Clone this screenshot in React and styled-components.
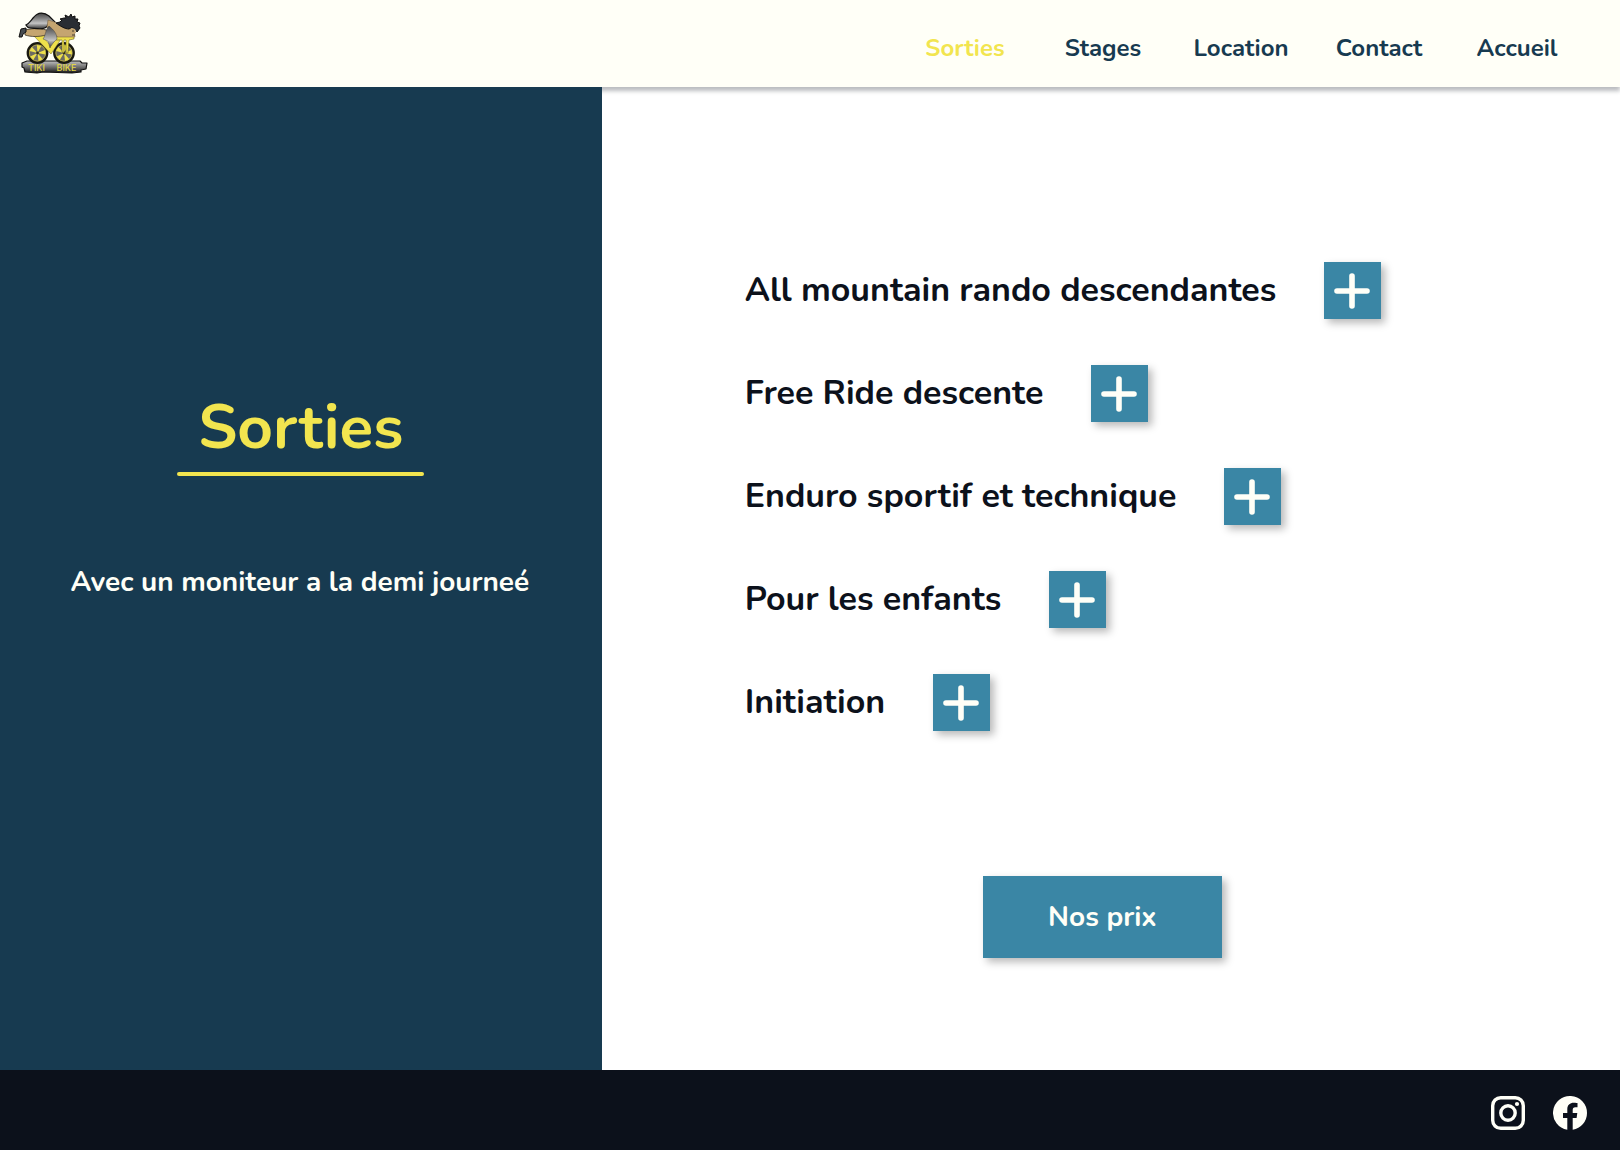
import React from "react";
import styled, { createGlobalStyle } from "styled-components";

const Global = createGlobalStyle`
  * { box-sizing: border-box; }
  html, body, #root { height: 100%; }
  body {
    margin: 0;
    background: #fff;
    color: #0c111b;
    font-family: Nunito, Lato, sans-serif;
    font-weight: 700;
  }
  h1, p, ul { margin: 0; padding: 0; }
`;

const Page = styled.div`
  min-height: 100%;
  display: flex;
  flex-direction: column;
`;

const Header = styled.header`
  position: relative;
  z-index: 1;
  height: 87px;
  flex: none;
  display: flex;
  align-items: center;
  justify-content: space-between;
  padding: 0 34px 0 16px;
  background: #fffff7;
  box-shadow: 0 4px 4px rgba(12, 17, 27, 0.28);
`;

const LogoLink = styled.a`
  display: block;
  height: 68px;
`;

const Nav = styled.nav`
  width: 690px;
  display: grid;
  grid-template-columns: repeat(5, 1fr);
`;

const NavLink = styled.a`
  color: ${(p) => (p.$active ? "#f2e54f" : "#173a50")};
  font-size: 24px;
  line-height: 34px;
  padding-top: 8px;
  text-align: center;
  text-decoration: none;
`;

const Main = styled.main`
  flex: 1;
  display: grid;
  grid-template-columns: 13fr 22fr;
`;

const Intro = styled.section`
  position: relative;
  z-index: 2;
  background: #173a50;
  padding-top: 300px;
  display: flex;
  flex-direction: column;
  align-items: center;
`;

const Title = styled.h1`
  min-width: 247px;
  color: #f2e54f;
  font-size: 62px;
  line-height: 82px;
  text-align: center;
  &::after {
    content: "";
    display: block;
    height: 4px;
    margin-top: 3px;
    border-radius: 2px;
    background: #f2e54f;
  }
`;

const Subtitle = styled.p`
  color: #fffff7;
  margin-top: 88px;
  font-size: 28px;
  line-height: 36px;
  padding-right: 2px;
  text-align: center;
`;

const Outings = styled.section`
  padding: 175px 160px 112px 143px;
  display: flex;
  flex-direction: column;
  align-items: center;
`;

const List = styled.ul`
  align-self: stretch;
  list-style: none;
  display: flex;
  flex-direction: column;
  gap: 46px;
`;

const Item = styled.li`
  display: flex;
  align-items: center;
  gap: 48px;
`;

const ItemName = styled.span`
  font-size: 34px;
  line-height: 46px;
  padding-bottom: 2px;
`;

const Action = styled.button`
  border: 0;
  border-radius: 0;
  padding: 0;
  display: flex;
  align-items: center;
  justify-content: center;
  background: #3a86a5;
  color: #fffff7;
  font: inherit;
  cursor: pointer;
  box-shadow: 4px 4px 8px rgba(0, 0, 0, 0.28);
`;

const PlusButton = styled(Action)`
  width: 57px;
  height: 57px;
  padding-right: 1px;
  flex: none;
`;

const PriceButton = styled(Action)`
  width: 239px;
  height: 82px;
  margin-top: 145px;
  font-size: 28px;
`;

const Footer = styled.footer`
  height: 80px;
  flex: none;
  display: flex;
  align-items: center;
  justify-content: flex-end;
  gap: 28px;
  padding: 6px 33px 0 0;
  background: #0c111b;
`;

const SocialLink = styled.a`
  display: block;
  width: 34px;
  height: 34px;
  color: #fffff7;
  svg { display: block; width: 100%; height: 100%; }
`;

function Wheel({ x }) {
  const spokes = [0, 72, 144, 216, 288];
  return (
    <g transform={`translate(${x} 53)`}>
      <circle r="9.7" fill="#6d6b62" stroke="#19180f" strokeWidth="2.4" />
      <circle r="8.1" fill="none" stroke="#b2a642" strokeWidth="0.9" />
      {spokes.map((a) => (
        <path key={a} d="M0 0 L-2.3 -7.8 L2.3 -7.8 Z" fill="#eee04b" transform={`rotate(${a + 12})`} />
      ))}
      <circle r="1.4" fill="#302c18" />
    </g>
  );
}

function Logo() {
  return (
    <svg width="74" height="68" viewBox="16 10 74 68" role="img" aria-label="Tiki Bike">
      <defs>
        <linearGradient id="metal" x1="0" y1="0" x2="0" y2="1">
          <stop offset="0" stopColor="#444" />
          <stop offset="0.35" stopColor="#858585" />
          <stop offset="0.65" stopColor="#c4c4c4" />
          <stop offset="1" stopColor="#333" />
        </linearGradient>
        <linearGradient id="plank" x1="0" y1="0" x2="0" y2="1">
          <stop offset="0" stopColor="#c0c0c0" />
          <stop offset="0.5" stopColor="#707070" />
          <stop offset="1" stopColor="#171717" />
        </linearGradient>
      </defs>
      <path d="M22 63 L27 61 L80 61 L82 63 L87 63 L86 69 L81 70 L81 72 L72 73 L43 72 L37 73 L25 72 L24 68 L22 67 Z" fill="url(#plank)" stroke="#111" strokeWidth="1.2" strokeLinejoin="round" />
      <Wheel x={37.5} />
      <Wheel x={64} />
      <path d="M33 35 L69 36 L70 39 L61 39 L51 54 Z M44 38 L51 46 L56 39 Z" fill="#eee04b" fillRule="evenodd" stroke="#6f661e" strokeWidth="0.5" />
      <path d="M56 36 L74 36 L74 39 L69 40 L68 53 L66 53 L66 40 L64 40 L64 53 L62 52 L62 40 L56 40 Z" fill="#eee04b" stroke="#534c1a" strokeWidth="0.5" />
      <path d="M25 30 C33 28 42 28 49 31 L46 35 C39 37 31 37 25 35 Z" fill="#c5a570" stroke="#28231a" strokeWidth="0.7" />
      <path d="M21 29 L26 28 L26 32 L23 34 L22 37 L19 37 Z" fill="#454b51" stroke="#111" strokeWidth="1" />
      <path d="M26 25 C30 23 31 20 34 17 C38 12 44 12 49 16 L55 22 L48 25 C45 31 35 28 30 28 C27 28 27 26 26 25 Z" fill="url(#metal)" stroke="#111" strokeWidth="1.2" />
      <path d="M48 20 C56 22 63 26 74 30 L75 37 L58 37 L51 33 L47 27 Z" fill="#c5a570" stroke="#6b5435" strokeWidth="0.5" />
      <path d="M49 26 C54 30 57 34 57 39 C55 41 52 43 50 48 L48 41 L43 39 C46 35 45 30 49 26 Z" fill="url(#metal)" stroke="#333" strokeWidth="0.4" />
      <path d="M56 23 L60 22 L62 20 L60 19 L64 18 L66 18 L65 15 L69 17 L71 14 L72 17 L75 16 L75 19 L78 19 L77 22 L80 23 L79 26 L80 28 L77 32 C75 28 72 27 69 29 C65 29 60 26 56 23 Z" fill="#292d33" stroke="#111" strokeWidth="1" strokeLinejoin="round" />
      <path d="M71 28 L75 29 L76 33 L73 34 L70 32 Z" fill="#c5a570" />
      <path d="M72 31 L74 31 M72 35 L75 35" stroke="#222" strokeWidth="0.8" />
      <g fill="#e3d645" fontFamily="Inter, sans-serif" fontWeight="500" fontSize="9">
        <text x="28" y="70.5">TIKI</text>
        <text x="56.5" y="71">BIKE</text>
      </g>
    </svg>
  );
}

function Plus() {
  return (
    <svg width="36" height="36" viewBox="0 0 36 36" fill="none" stroke="currentColor" strokeWidth="5.6" strokeLinecap="round" aria-hidden="true">
      <path d="M18 3 V33 M3 18 H33" />
    </svg>
  );
}

function Instagram() {
  return (
    <svg viewBox="0 0 34 34" fill="none" stroke="currentColor" strokeWidth="3.4" aria-hidden="true">
      <rect x="1.7" y="1.7" width="30.6" height="30.6" rx="8" />
      <circle cx="17" cy="17" r="7.2" />
      <circle cx="26" cy="8" r="2.1" fill="currentColor" stroke="none" />
    </svg>
  );
}

function Facebook() {
  return (
    <svg viewBox="0 0 34 34" fill="currentColor" aria-hidden="true">
      <path d="M34 17 A17 17 0 1 0 14.3 33.8 V21.9 H10 V17 H14.3 V13.3 C14.3 9 16.9 6.7 20.8 6.7 C22.6 6.7 24.5 7 24.5 7 V11.2 H22.4 C20.3 11.2 19.7 12.5 19.7 13.8 V17 H24.3 L23.6 21.9 H19.7 V33.8 A17 17 0 0 0 34 17 Z" />
    </svg>
  );
}

const pages = ["Sorties", "Stages", "Location", "Contact", "Accueil"];
const outings = [
  "All mountain rando descendantes",
  "Free Ride descente",
  "Enduro sportif et technique",
  "Pour les enfants",
  "Initiation",
];

export default function App() {
  return (
    <Page>
      <Global />
      <Header>
        <LogoLink href="#accueil"><Logo /></LogoLink>
        <Nav>
          {pages.map((name) => (
            <NavLink key={name} href={`#${name.toLowerCase()}`} $active={name === "Sorties"}>{name}</NavLink>
          ))}
        </Nav>
      </Header>
      <Main>
        <Intro>
          <Title>Sorties</Title>
          <Subtitle>Avec un moniteur a la demi journeé</Subtitle>
        </Intro>
        <Outings>
          <List>
            {outings.map((name) => (
              <Item key={name}>
                <ItemName>{name}</ItemName>
                <PlusButton type="button" aria-label={name}><Plus /></PlusButton>
              </Item>
            ))}
          </List>
          <PriceButton type="button">Nos prix</PriceButton>
        </Outings>
      </Main>
      <Footer>
        <SocialLink href="#instagram" aria-label="Instagram"><Instagram /></SocialLink>
        <SocialLink href="#facebook" aria-label="Facebook"><Facebook /></SocialLink>
      </Footer>
    </Page>
  );
}
